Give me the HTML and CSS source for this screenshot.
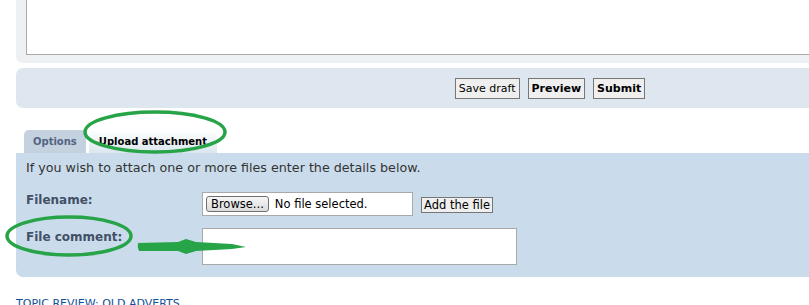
FILE: index.html
```html
<!DOCTYPE html>
<html lang="en">
  <head>
    <meta charset="UTF-8" />
    <title>Post a reply</title>
    <link rel="stylesheet" href="styles.css">
  </head>
  <body>
    <div class="page">
      <div class="editor-panel">
        <div class="message-box"></div>
      </div>

      <div class="submit-panel">
        <button type="button" class="btn">Save draft</button>
        <button type="button" class="btn btn-bold">Preview</button>
        <button type="button" class="btn btn-bold">Submit</button>
      </div>

      <ul class="tabs">
        <li class="tab">Options</li>
        <li class="tab active">Upload attachment</li>
      </ul>

      <div class="attach-panel">
        <p class="intro">If you wish to attach one or more files enter the details below.</p>
        <div class="row">
          <label class="label">Filename:</label>
          <div class="file-box">
            <span class="browse">Browse...</span>
            <span class="file-name">No file selected.</span>
          </div>
          <button type="button" class="btn add-btn">Add the file</button>
        </div>
        <div class="row">
          <label class="label">File comment:</label>
          <div class="comment-box"><span class="grip"></span></div>
        </div>
      </div>

      <h3 class="review-title">Topic review: Old adverts</h3>

      <!-- hand-drawn annotations -->
      <svg class="marks" width="809" height="305" viewBox="0 0 809 305">
        <ellipse cx="155" cy="132" rx="70" ry="20" fill="none" stroke="#27a348" stroke-width="3.5" />
        <ellipse cx="69" cy="236" rx="62" ry="19" fill="none" stroke="#27a348" stroke-width="3.5" />
        <path d="M138 243 Q137 247 139 251 L178 251 L186 254 L196 251 L232 249 L246 247 L232 244 L196 242 L186 239 L178 242 Z" fill="#27a348" />
      </svg>
    </div>
  </body>
</html>
```

FILE: styles.css
```css
html {
  overflow: hidden;
}

body {
  margin: 0;
  font-family: "DejaVu Sans", Verdana, sans-serif;
  font-size: 11px;
  color: #333;
  background: #fff;
}

.page {
  position: relative;
  width: 1084px;
}

.editor-panel {
  margin-left: 16px;
  height: 55px;
  padding: 0 0 8px 10px;
  background: #edf1f4;
  border-radius: 0 0 0 7px;
}

.message-box {
  height: 54px;
  background: #fff;
  border: 1px solid #a9a9a9;
  border-top: none;
}

.submit-panel {
  margin: 5px 0 0 16px;
  height: 40px;
  background: #dee7ef;
  border-radius: 7px 0 0 7px;
  display: flex;
  justify-content: center;
  align-items: center;
  gap: 8px;
}

.btn {
  font-family: "DejaVu Sans", Verdana, sans-serif;
  font-size: 11px;
  color: #000;
  background: #efefef;
  border: 1px solid #767676;
  padding: 2px 3px;
  margin: 0;
  line-height: 15px;
}

.btn-bold {
  font-weight: bold;
}

.tabs {
  list-style: none;
  margin: 22px 0 0 24px;
  padding: 0;
  display: flex;
  gap: 3px;
  height: 23px;
}

.tab {
  font-size: 10px;
  font-weight: bold;
  color: #536482;
  background: #c3d2de;
  padding: 0 9px;
  line-height: 24px;
  border-radius: 5px 5px 0 0;
}

.tab.active {
  color: #000;
  background: linear-gradient(#ffffff, #dbe6ef);
  padding: 0 10px;
}

.attach-panel {
  margin-left: 16px;
  height: 117px;
  padding: 7px 10px 0;
  background: #cadceb;
  border-radius: 0 0 0 7px;
}

.intro {
  margin: 0;
  font-size: 12.7px;
  line-height: 16px;
  color: #333;
}

.row {
  display: flex;
  align-items: flex-start;
  margin-top: 16px;
}

.row + .row {
  margin-top: 12px;
}

.label {
  width: 176px;
  font-size: 12px;
  line-height: 14px;
  font-weight: bold;
  color: #425067;
  padding-top: 1px;
}

.row + .row .label {
  padding-top: 2px;
}

.file-box {
  width: 206px;
  height: 22px;
  background: #fff;
  border: 1px solid #a9a9a9;
  display: flex;
  align-items: center;
  padding-left: 3px;
}

.browse {
  font-size: 11.5px;
  color: #000;
  padding: 0 4px;
  line-height: 14px;
  background: linear-gradient(#f6f6f6, #dcdcdc);
  border: 1px solid #707070;
  border-radius: 3px;
}

.file-name {
  margin-left: 6px;
  font-size: 11.5px;
  color: #000;
}

.add-btn {
  margin: 5px 0 0 8px;
  padding: 0 2px;
  line-height: 14px;
  font-size: 11.5px;
}

.comment-box {
  position: relative;
  width: 313px;
  height: 35px;
  background: #fff;
  border: 1px solid #a9a9a9;
}

.grip {
  position: absolute;
  right: 3px;
  bottom: 3px;
  width: 5px;
  height: 5px;
  background: radial-gradient(circle, #999 40%, transparent 45%) 0 0 / 2px 2px;
}

.review-title {
  margin: 20px 0 0 16px;
  font-size: 11px;
  font-weight: normal;
  text-transform: uppercase;
  color: #115098;
}

.marks {
  position: absolute;
  left: 0;
  top: 0;
  pointer-events: none;
}
```
